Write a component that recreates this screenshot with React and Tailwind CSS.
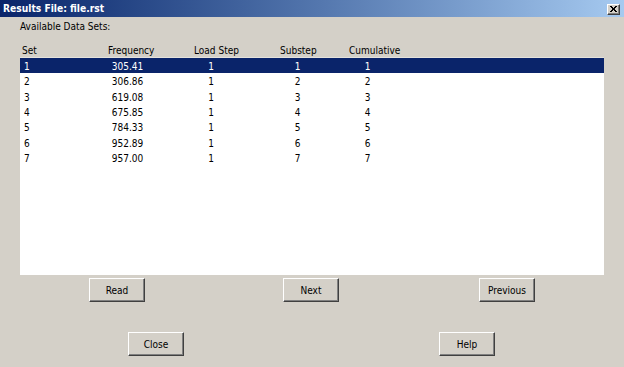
import React from "react";

const rows = [
  ["1", "305.41", "1", "1", "1"],
  ["2", "306.86", "1", "2", "2"],
  ["3", "619.08", "1", "3", "3"],
  ["4", "675.85", "1", "4", "4"],
  ["5", "784.33", "1", "5", "5"],
  ["6", "952.89", "1", "6", "6"],
  ["7", "957.00", "1", "7", "7"],
];

function Btn({ children, className = "" }) {
  return (
    <div
      className={
        "w-[56px] h-[24px] flex items-center justify-center bg-[#d4d0c8] border border-t-white border-l-white border-r-[#404040] border-b-[#404040] shadow-[inset_-1px_-1px_0_#808080] text-black " +
        className
      }
    >
      {children}
    </div>
  );
}

export default function App() {
  return (
    <div
      className="w-[624px] h-[367px] bg-[#d4d0c8] flex flex-col text-[10px] text-black overflow-hidden"
      style={{ fontFamily: '"DejaVu Sans Condensed", "DejaVu Sans", sans-serif' }}
    >
      <div className="h-[17px] flex items-center justify-between pl-[3px] pr-[4px] bg-gradient-to-r from-[#0a246a] to-[#a6caf0]">
        <span className="text-white font-bold text-[10.2px] leading-none pt-[2px]">Results File: file.rst</span>
        <div className="w-[13px] h-[11px] mt-[1px] flex items-center justify-center bg-[#d4d0c8] border border-t-white border-l-white border-r-[#404040] border-b-[#404040] shadow-[inset_-1px_-1px_0_#808080]">
          <svg width="7" height="6" viewBox="0 0 7 6">
            <path d="M0 0L6 6M1 0L7 6M6 0L0 6M7 0L1 6" stroke="#000" strokeWidth="1" />
          </svg>
        </div>
      </div>

      <div className="mt-[3px] pl-[20px] h-[14px] leading-[14px]">Available Data Sets:</div>

      <div className="mt-[10px] h-[13px] leading-[13px] flex pl-[20px]">
        <div className="w-[86px] pl-[2px]">Set</div>
        <div className="w-[86px] pl-[2px]">Frequency</div>
        <div className="w-[86px] pl-[2px]">Load Step</div>
        <div className="w-[69px] pl-[2px]">Substep</div>
        <div className="pl-[2px]">Cumulative</div>
      </div>

      <div className="ml-[20px] w-[584px] h-[218px] bg-white border-t border-[#e4e2dc] flex flex-col">
        {rows.map((r, i) => (
          <div
            key={i}
            className={
              "h-[15.33px] leading-[17px] flex shrink-0 " +
              (i === 0 ? "bg-[#0a246a] text-white" : "")
            }
          >
            <div className="w-[86px] pl-[4px]">{r[0]}</div>
            <div className="w-[86px]">
              <div className="w-[43px] text-center">{r[1]}</div>
            </div>
            <div className="w-[86px]">
              <div className="w-[38px] text-center">{r[2]}</div>
            </div>
            <div className="w-[69px]">
              <div className="w-[39px] text-center">{r[3]}</div>
            </div>
            <div>
              <div className="w-[41px] text-center">{r[4]}</div>
            </div>
          </div>
        ))}
      </div>

      <div className="mt-[3px] flex pl-[89px]">
        <Btn>Read</Btn>
        <Btn className="ml-[138px]">Next</Btn>
        <Btn className="ml-[140px]">Previous</Btn>
      </div>

      <div className="mt-[30px] flex pl-[128px]">
        <Btn>Close</Btn>
        <Btn className="ml-[255px]">Help</Btn>
      </div>
    </div>
  );
}
